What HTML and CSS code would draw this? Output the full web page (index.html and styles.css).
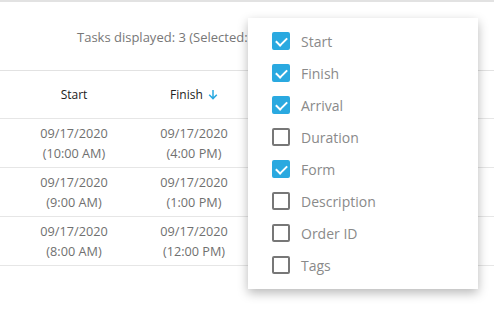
FILE: index.html
```html
<!DOCTYPE html>
<html lang="en">
<head>
    <meta charset="UTF-8">
    <meta name="viewport" content="width=device-width, initial-scale=1.0">
    <title>Tasks</title>
    <link rel="stylesheet" href="styles.css">
</head>
<body>
    <div class="toolbar">
        <span class="tasks-count">Tasks displayed: 3 (Selected: 0)</span>
    </div>

    <div class="grid">
        <div class="row head">
            <div class="cell">Start</div>
            <div class="cell">Finish
                <svg class="sort" width="10" height="11" viewBox="0 0 10 11"><path d="M5 1v8.5M1.2 5.8L5 9.6l3.8-3.8" fill="none" stroke="#2aa9e0" stroke-width="1.5"/></svg>
            </div>
            <div class="cell"></div>
        </div>
        <div class="row">
            <div class="cell">09/17/2020<br>(10:00 AM)</div>
            <div class="cell">09/17/2020<br>(4:00 PM)</div>
            <div class="cell"></div>
        </div>
        <div class="row">
            <div class="cell">09/17/2020<br>(9:00 AM)</div>
            <div class="cell">09/17/2020<br>(1:00 PM)</div>
            <div class="cell"></div>
        </div>
        <div class="row">
            <div class="cell">09/17/2020<br>(8:00 AM)</div>
            <div class="cell">09/17/2020<br>(12:00 PM)</div>
            <div class="cell"></div>
        </div>
    </div>

    <div class="columns-menu">
        <label class="opt"><span class="box on"></span>Start</label>
        <label class="opt"><span class="box on"></span>Finish</label>
        <label class="opt"><span class="box on"></span>Arrival</label>
        <label class="opt"><span class="box"></span>Duration</label>
        <label class="opt"><span class="box on"></span>Form</label>
        <label class="opt"><span class="box"></span>Description</label>
        <label class="opt"><span class="box"></span>Order ID</label>
        <label class="opt"><span class="box"></span>Tags</label>
    </div>
</body>
</html>
```

FILE: styles.css
```css
body {
    margin: 0;
    font-family: "Open Sans", Arial, sans-serif;
    background: #fff;
    border-top: 2px solid #e2e2e2;
    position: relative;
    height: 314px;
    overflow: hidden;
}

.toolbar {
    height: 68px;
    display: flex;
    align-items: center;
    padding-left: 77px;
    box-sizing: border-box;
}

.tasks-count {
    font-size: 13px;
    color: #777;
    white-space: nowrap;
    margin-top: 2px;
}

.grid {
    border-top: 1px solid #e2e2e2;
}

.row {
    display: grid;
    grid-template-columns: 14px 120px 120px 1fr;
    height: 48px;
    border-bottom: 1px solid #e6e6e6;
    align-items: center;
}

.row::before {
    content: "";
}

.row.head {
    height: 47px;
}

.cell {
    text-align: center;
    font-size: 12.7px;
    line-height: 20px;
    color: #707070;
}

.head .cell {
    font-size: 12px;
    color: #222;
}

.sort {
    vertical-align: -1px;
    margin-left: 2px;
}

.columns-menu {
    position: absolute;
    left: 248px;
    top: 16px;
    width: 230px;
    height: 271px;
    background: #fff;
    box-shadow: 0 4px 10px rgba(0, 0, 0, 0.28);
    padding: 7px 0 8px 24px;
    box-sizing: border-box;
}

.opt {
    display: flex;
    align-items: center;
    height: 32px;
    font-size: 14px;
    color: #8a8a8a;
}

.box {
    width: 18px;
    height: 18px;
    border: 2px solid #777;
    border-radius: 2px;
    box-sizing: border-box;
    margin-right: 11px;
    position: relative;
}

.box.on {
    background: #2aa9e0;
    border-color: #2aa9e0;
}

.box.on::after {
    content: "";
    position: absolute;
    left: 4px;
    top: 1px;
    width: 5px;
    height: 9px;
    border: solid #fff;
    border-width: 0 2px 2px 0;
    transform: rotate(45deg);
}
```
